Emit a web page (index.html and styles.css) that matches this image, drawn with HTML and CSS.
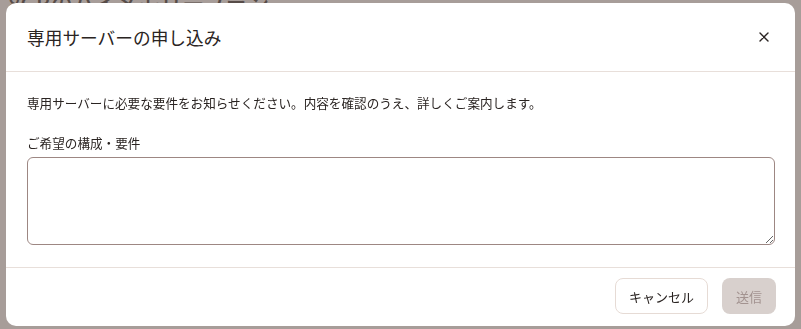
FILE: index.html
```html
<!DOCTYPE html>
<html lang="ja">
<head>
    <meta charset="UTF-8">
    <meta name="viewport" content="width=device-width, initial-scale=1.0">
    <title>専用サーバーの申し込み</title>
    <link rel="stylesheet" href="styles.css">
</head>
<body>

    <!-- 背景のページ -->
    <div class="page">
        <h1 class="page-title">8GBのハイメモリープラン</h1>
        <div class="page-rule"></div>
    </div>

    <!-- モーダル -->
    <div class="overlay">
        <div class="modal">
            <div class="modal-header">
                <h2>専用サーバーの申し込み</h2>
                <button class="close" type="button" aria-label="閉じる">
                    <svg width="10" height="10" viewBox="0 0 10 10">
                        <path d="M1 1L9 9M9 1L1 9" stroke="#2a2422" stroke-width="1.4" stroke-linecap="round"/>
                    </svg>
                </button>
            </div>
            <div class="modal-body">
                <p>専用サーバーに必要な要件をお知らせください。内容を確認のうえ、詳しくご案内します。</p>
                <label for="requirements">ご希望の構成・要件</label>
                <textarea id="requirements"></textarea>
            </div>
            <div class="modal-footer">
                <button class="btn btn-cancel" type="button">キャンセル</button>
                <button class="btn btn-send" type="button" disabled>送信</button>
            </div>
        </div>
    </div>

</body>
</html>
```

FILE: styles.css
```css
html, body {
    margin: 0;
    height: 100%;
}
body {
    font-family: "Noto Sans CJK JP", "Noto Sans", sans-serif;
    background-color: #f7f3f1;
    color: #2a2422;
    overflow: hidden;
}
.page {
    padding: 0 8px;
}
.page-title {
    margin: -14px 0 0;
    font-size: 22px;
    font-weight: 500;
    color: #3a3330;
}
.page-rule {
    margin-top: 125px;
    height: 1px;
    background-color: #d8cfcb;
}
.overlay {
    position: fixed;
    inset: 0;
    background-color: rgba(108, 94, 90, 0.58);
    display: flex;
    align-items: center;
    justify-content: center;
}
.modal {
    width: calc(100% - 12px);
    height: calc(100% - 6px);
    background-color: #fff;
    border-radius: 10px;
    display: flex;
    flex-direction: column;
    box-sizing: border-box;
}
.modal-header {
    height: 68px;
    display: flex;
    align-items: center;
    justify-content: space-between;
    padding: 0 20px 0 21px;
    border-bottom: 1px solid #e8dfda;
    flex-shrink: 0;
}
.modal-header h2 {
    margin: 0;
    font-size: 17.7px;
    font-weight: 400;
}
.close {
    border: none;
    background: none;
    padding: 4px;
    margin-right: 2px;
    cursor: pointer;
    display: flex;
}
.modal-body {
    flex: 1;
    padding: 21px 20px 21px 21px;
    display: flex;
    flex-direction: column;
}
.modal-body p {
    margin: 0 0 21px;
    font-size: 12.6px;
    line-height: 20px;
}
.modal-body label {
    font-size: 12.6px;
    line-height: 18px;
    margin-bottom: 5px;
}
textarea {
    height: 88px;
    box-sizing: border-box;
    border: 1px solid #9d8783;
    border-radius: 6px;
    resize: vertical;
    font-family: inherit;
    font-size: 13px;
    padding: 8px 10px;
}
.modal-footer {
    height: 59px;
    border-top: 1px solid #e8dfda;
    display: flex;
    justify-content: flex-end;
    align-items: flex-start;
    gap: 14px;
    padding: 10px 19px 0;
    box-sizing: border-box;
    flex-shrink: 0;
}
.btn {
    height: 36px;
    border-radius: 8px;
    font-family: inherit;
    font-size: 13px;
    cursor: pointer;
}
.btn-cancel {
    width: 93px;
    background-color: #fff;
    border: 1px solid #e6dbd5;
    color: #2a2422;
}
.btn-send {
    width: 54px;
    background-color: #d8d0cd;
    border: none;
    color: #a39390;
    cursor: default;
}
```
